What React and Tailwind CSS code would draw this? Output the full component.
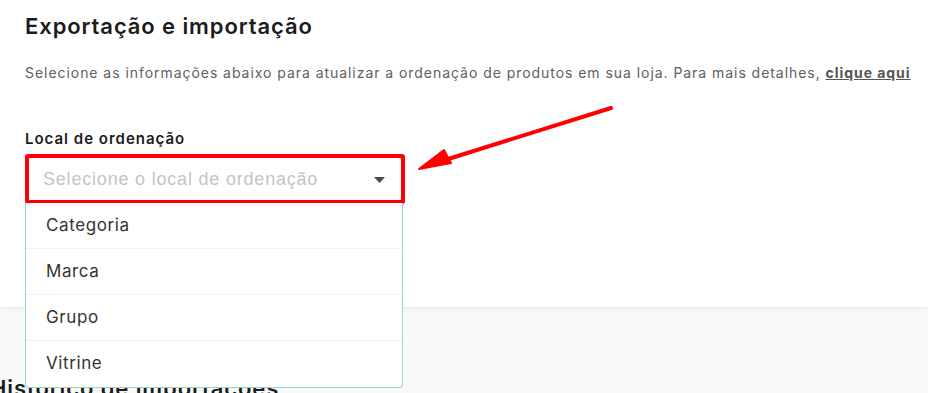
import React from 'react';

const options = ['Categoria', 'Marca', 'Grupo', 'Vitrine'];

const App = () => {
  return (
    <div className="relative h-[393px] w-[928px] overflow-hidden bg-[#f9f9f9] font-['Inter',sans-serif]">
      <section className="h-[307px] bg-white px-[25px] pt-[10px] shadow-[0_2px_6px_rgba(0,0,0,0.06)]">
        <h1 className="text-[22px] font-semibold leading-[32px] tracking-[0.9px] text-[#1c1c1c]">Exportação e importação</h1>
        <p className="mt-[21px] whitespace-nowrap text-[14px] leading-[20px] tracking-[0.95px] text-[#606060]">
          Selecione as informações abaixo para atualizar a ordenação de produtos em sua loja. Para mais detalhes,{' '}
          <a className="font-bold text-[#555] underline">clique aqui</a>
        </p>

        <label className="mt-[46px] block text-[15px] font-semibold leading-[20px] tracking-[1px] text-[#1c1c1c]">
          Local de ordenação
        </label>
        <div className="relative mt-[5px] w-[380px]">
          <div className="flex h-[50px] items-center justify-between rounded-[3px] border-[4px] border-[#ff0000] pl-[14px] pr-[16px]">
            <span className="font-['Liberation_Sans',Arial,sans-serif] text-[18px] tracking-[0.8px] text-[#c4c4c4]">
              Selecione o local de ordenação
            </span>
            <svg width="11" height="6" viewBox="0 0 11 6" className="mt-[1px]">
              <path d="M0 0h11L5.5 6z" fill="#4a4a4a" />
            </svg>
          </div>
          <ul className="absolute left-0 top-[49px] z-10 w-[378px] rounded-b-[4px] border border-t-0 border-[#9dcedb] bg-white">
            {options.map((o, i) => (
              <li
                key={o}
                className={`flex h-[46px] items-center px-[20px] text-[17px] tracking-[0.6px] text-[#333] ${i < options.length - 1 ? 'border-b border-[#f1f1f1]' : ''}`}
              >
                {o}
              </li>
            ))}
          </ul>
        </div>
      </section>

      <h2 className="ml-[-10px] mt-[66px] text-[22px] font-semibold leading-[30px] tracking-[0.9px] text-[#1c1c1c]">Histórico de importações</h2>

      <svg className="pointer-events-none absolute left-0 top-0" width="928" height="393">
        <line x1="611" y1="108" x2="445" y2="160" stroke="#ff0000" strokeWidth="4" strokeLinecap="round" />
        <path d="M419 169L444 150L451 163Z" fill="#ff0000" stroke="#ff0000" strokeWidth="2" strokeLinejoin="round" />
      </svg>
    </div>
  );
};

export default App;
